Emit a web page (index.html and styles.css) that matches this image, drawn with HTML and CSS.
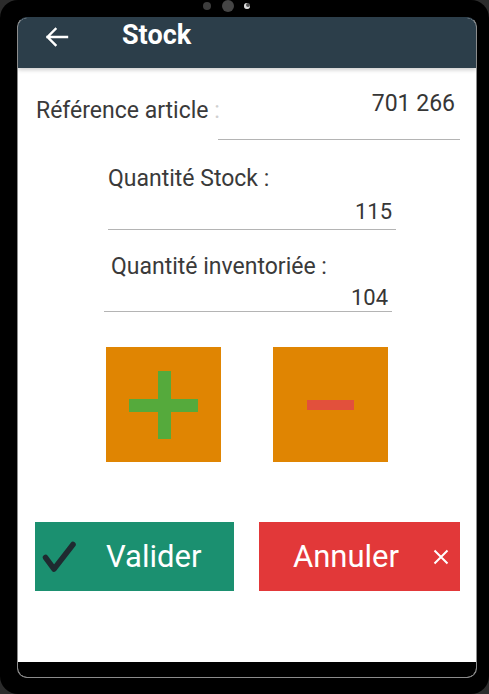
FILE: index.html
```html
<!DOCTYPE html>
<html lang="fr">
<head>
    <meta charset="UTF-8">
    <meta name="viewport" content="width=device-width, initial-scale=1.0">
    <title>Stock</title>
    <link rel="stylesheet" href="styles.css">
</head>
<body>
    <div class="device">
        <!-- capteurs de la tablette -->
        <div class="camera">
            <span class="cam-dot cam-small"></span>
            <span class="cam-dot cam-lens"></span>
            <span class="cam-dot cam-sensor"></span>
        </div>

        <div class="screen">
            <header class="app-bar">
                <svg class="back-icon" width="24" height="20" viewBox="0 0 24 20">
                    <path d="M22 10H2.5M10.5 2L2.5 10l8 8" fill="none" stroke="#fff" stroke-width="2.4" stroke-linecap="square"/>
                </svg>
                <h1>Stock</h1>
            </header>

            <main class="content">
                <div class="ref-row">
                    <div class="ref-label">Référence article <span class="colon">:</span></div>
                    <div class="ref-value">701 266</div>
                </div>

                <div class="qty-field qty-stock">
                    <div class="qty-label">Quantité Stock :</div>
                    <div class="qty-value">115</div>
                </div>

                <div class="qty-field qty-inv">
                    <div class="qty-label">Quantité inventoriée :</div>
                    <div class="qty-value">104</div>
                </div>

                <!-- boutons plus / moins -->
                <div class="step-buttons">
                    <button class="step-btn" aria-label="Ajouter">
                        <svg width="115" height="115" viewBox="0 0 115 115">
                            <rect x="52" y="24" width="13" height="68" fill="#55aa3c"/>
                            <rect x="23" y="52" width="69" height="13" fill="#55aa3c"/>
                        </svg>
                    </button>
                    <button class="step-btn" aria-label="Retirer">
                        <svg width="115" height="115" viewBox="0 0 115 115">
                            <rect x="34" y="53" width="47" height="10" fill="#e2503c"/>
                        </svg>
                    </button>
                </div>

                <div class="actions">
                    <button class="action-btn btn-valider">
                        <svg class="check-icon" width="34" height="32" viewBox="0 0 34 32">
                            <path d="M3.5 16.5l8.5 11.5L31 3.5" fill="none" stroke="#1f2a30" stroke-width="5.5" stroke-linecap="round" stroke-linejoin="round"/>
                        </svg>
                        <span>Valider</span>
                    </button>
                    <button class="action-btn btn-annuler">
                        <span>Annuler</span>
                        <svg class="close-icon" width="16" height="16" viewBox="0 0 16 16">
                            <path d="M1.5 1.5l13 13M14.5 1.5l-13 13" fill="none" stroke="#fff" stroke-width="2"/>
                        </svg>
                    </button>
                </div>
            </main>

            <div class="nav-bar"></div>
        </div>
    </div>
</body>
</html>
```

FILE: styles.css
```css
body {
    margin: 0;
    background-color: #2b2b2b;
    font-family: Roboto, "Noto Sans", Arial, sans-serif;
}

.device {
    width: 489px;
    height: 694px;
    box-sizing: border-box;
    padding: 0 12px 0 17px;
    background-color: #000;
    border-radius: 18px;
    display: flex;
    flex-direction: column;
}

/* capteurs */
.camera {
    height: 17px;
    box-sizing: border-box;
    padding: 0 0 5px 186px;
    display: flex;
    align-items: center;
}

.cam-dot {
    display: block;
    border-radius: 50%;
    background-color: #3d3d3d;
}

.cam-small {
    width: 8px;
    height: 8px;
}

.cam-lens {
    width: 12px;
    height: 12px;
    margin-left: 11px;
    background-color: #454545;
}

.cam-sensor {
    width: 6px;
    height: 6px;
    margin-left: 10px;
    background-color: #555;
    box-shadow: inset 1px -1px 0 1px #ddd;
}

/* écran */
.screen {
    width: 460px;
    height: 661px;
    box-sizing: border-box;
    border: 1px solid #8c8c8c;
    border-top-color: #2c3e4a;
    border-radius: 10px;
    overflow: hidden;
    background-color: #fff;
    display: flex;
    flex-direction: column;
}

.app-bar {
    height: 50px;
    box-sizing: border-box;
    padding: 2px 0 0 27px;
    background-color: #2c3e4a;
    display: flex;
    align-items: flex-start;
    box-shadow: 0 2px 4px rgba(0, 0, 0, 0.2);
    position: relative;
    z-index: 1;
}

.back-icon {
    margin-top: 7px;
}

.app-bar h1 {
    margin: 0 0 0 53px;
    color: #fff;
    font-size: 27px;
    line-height: 30px;
    font-weight: 700;
}

.content {
    flex: 1;
    color: #363636;
}

/* référence article */
.ref-row {
    margin-top: 22px;
    padding: 0 16px 0 18px;
    display: flex;
    align-items: flex-end;
}

.ref-label {
    flex: 1;
    min-width: 0;
    white-space: nowrap;
    font-size: 23px;
    line-height: 28px;
    margin-bottom: 15px;
    color: #3a3a3a;
}

.ref-label .colon {
    color: #d0d0d0;
}

.ref-value {
    flex: 0 0 242px;
    box-sizing: border-box;
    padding: 0 5px 21px 0;
    border-bottom: 1px solid #b4b4b4;
    text-align: right;
    font-size: 23px;
    line-height: 28px;
}

/* quantités */
.qty-field {
    width: 288px;
}

.qty-label {
    font-size: 23px;
    line-height: 28px;
    color: #3a3a3a;
}

.qty-value {
    margin-top: 6px;
    padding: 0 4px 4px 0;
    border-bottom: 1px solid #b4b4b4;
    text-align: right;
    font-size: 22px;
    line-height: 26px;
}

.qty-stock {
    margin: 25px 0 0 90px;
}

.qty-inv {
    margin: 23px 0 0 86px;
}

.qty-inv .qty-label {
    padding-left: 7px;
}

.qty-inv .qty-value {
    margin-top: 4px;
    padding-bottom: 0;
}

/* plus / moins */
.step-buttons {
    margin: 35px 0 0 88px;
    display: flex;
    gap: 52px;
}

.step-btn {
    width: 115px;
    height: 115px;
    padding: 0;
    border: none;
    background-color: #e08502;
    display: block;
    cursor: pointer;
}

.step-btn svg {
    display: block;
}

/* valider / annuler */
.actions {
    margin: 60px 0 0 17px;
    display: flex;
    gap: 25px;
}

button {
    font: inherit;
}

.action-btn {
    height: 69px;
    border: none;
    display: flex;
    align-items: center;
    color: #fff;
    font-size: 31px;
    cursor: pointer;
}

.btn-valider {
    width: 199px;
    padding: 0 0 0 7px;
    background-color: #1b9070;
    gap: 30px;
}

.btn-annuler {
    width: 201px;
    padding: 0 0 0 34px;
    background-color: #e23839;
    gap: 34px;
}

.check-icon {
    margin-top: 1px;
}

.nav-bar {
    height: 15px;
    background-color: #000;
}
```
